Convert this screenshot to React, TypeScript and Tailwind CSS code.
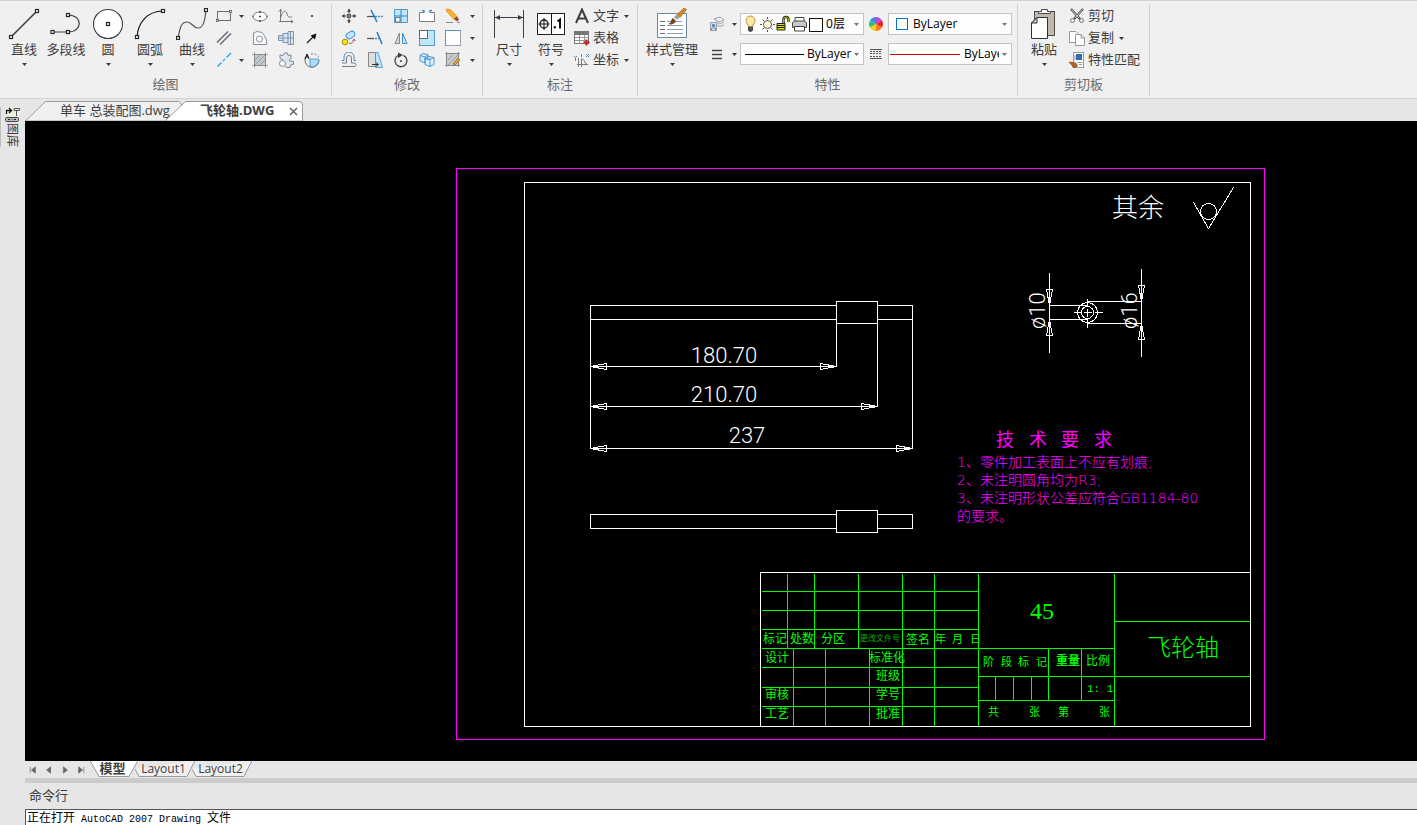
import React, { type ReactNode } from "react";

const INK = "#3b3f4a";
const BLUE = "#3f8fd0";
const SKY = "#bfe6fb";

function Icon({ size = 16, children }: { size?: number; children: ReactNode }) {
  return (
    <svg width={size} height={size} viewBox={`0 0 ${size} ${size}`} fill="none" stroke={INK} aria-hidden="true" className="shrink-0">
      {children}
    </svg>
  );
}

function Caret() {
  return (
    <svg width="5" height="3" viewBox="0 0 5 3" fill="#3c3c3c" aria-hidden="true" className="shrink-0">
      <path d="M0 0h5L2.500 3z" />
    </svg>
  );
}

function Knot({ x, y }: { x: number; y: number }) {
  return <rect x={x - 1.5} y={y - 1.5} width="3" height="3" fill="#fff" stroke="#23262e" strokeWidth="1.2" />;
}

/* ---------- large icons (32 x 32) ---------- */

const big = {
  line: (
    <>
      <path d="M3 29L29 3" strokeWidth="1.6" />
      <Knot x={3} y={29} />
      <Knot x={29} y={3} />
    </>
  ),
  polyline: (
    <>
      <path d="M2 24H18C33 24 33 7 18 7" strokeWidth="1.2" />
      <Knot x={2.5} y={24} />
      <Knot x={18} y={24} />
      <Knot x={18} y={7} />
    </>
  ),
  circle: (
    <>
      <circle cx="16" cy="16" r="14.5" fill="#fff" strokeWidth="1.1" />
      <Knot x={16} y={16} />
    </>
  ),
  arc: (
    <>
      <path d="M3 29C4 14 14 3 29 3" stroke="#111" strokeWidth="1.2" />
      <Knot x={3} y={29} />
      <Knot x={29} y={3} />
    </>
  ),
  spline: (
    <>
      <path d="M2 30C4 20 5 14 11 14C16 14 17 20 22 20C28 20 29 11 30 2" stroke="#555" strokeWidth="1.2" />
      <Knot x={2} y={30} />
      <Knot x={30} y={2} />
    </>
  ),
  dimension: (
    <>
      <path d="M1.500 2V30M30.500 2V30M2 9.500H30" strokeWidth="1" />
      <path d="M2 9.500L7 7V12zM30 9.500L25 7V12z" fill={INK} stroke="none" />
    </>
  ),
  symbol: (
    <>
      <rect x="2.500" y="5.500" width="27" height="21" fill="#fff" stroke="#222" />
      <path d="M16.500 5V27M3.500 16H14.500M9 10V22" stroke="#111" />
      <circle cx="9" cy="16" r="4" stroke="#111" strokeWidth="1.300" />
      <circle cx="19.800" cy="19.300" r="1.200" fill="#111" stroke="none" />
      <path d="M22.500 13.500L25 11.500V20.500" stroke="#111" strokeWidth="2" />
    </>
  ),
  styles: (
    <>
      <rect x="1.500" y="5.500" width="29" height="24" fill="#fff" stroke="#6f87a3" />
      <path d="M4 13.500h5M4 17.500h5M4 21.500h5M4 25.500h5" stroke="#5f6b7a" />
      <path d="M11 13.500h15M11 17.500h16M11 21.500h16M11 25.500h16" stroke="#8fa0b4" />
      <path d="M12 16c4-1 2-4 5-6l3 3c-1 3-5 4-8 3z" fill="#7a4218" stroke="none" />
      <path d="M18 9l2.500-2.500 3 3L21 12z" fill="#9aa3ab" stroke="none" />
      <path d="M21 6.500L28 0l2.500 1.500L24 9.500z" fill="#d9862b" stroke="#8c5216" strokeWidth=".6" />
    </>
  ),
  paste: (
    <>
      <rect x="6.500" y="3.500" width="20" height="24" fill="#c3b8aa" stroke="#4b4b4b" />
      <path d="M10.500 5.500V3.500h3V1.500h6v2h3v2z" fill="#fff" stroke="#4b4b4b" />
      <path d="M9 9.500H19.500V30.500H3.500V15z" fill="#fff" stroke="#2f2f36" />
      <path d="M9 9.500V15H3.500z" fill="#ccd1dc" stroke="#2f2f36" />
    </>
  ),
};

/* ---------- small icons (16 x 16) ---------- */

const small = {
  rect: (
    <>
      <rect x="1.500" y="3.500" width="13" height="9" stroke="#666b76" />
      <rect x=".5" y="11.500" width="2" height="2" fill="#fff" stroke="#555" strokeWidth=".8" />
      <rect x="13.500" y="2.500" width="2" height="2" fill="#fff" stroke="#555" strokeWidth=".8" />
    </>
  ),
  ellipse: (
    <>
      <ellipse cx="8" cy="8.500" rx="7" ry="4.500" fill="#fff" stroke="#777d88" />
      <path d="M7 8.500h2M7 4h2M7 13h2M.5 8.500h1M14.500 8.500h1" stroke="#444" strokeWidth="1.500" />
    </>
  ),
  chart: (
    <>
      <path d="M2.500 1V14M1 13.500H15M1 3.500L2.500 1.500L4 3.500M13 12L15 13.500L13 15" stroke="#777" />
      <path d="M2.500 10C5 2 8 2 9 6S12 9 14 9" stroke="#777" />
    </>
  ),
  point: <rect x="7" y="7" width="2" height="2" fill="#555" stroke="none" />,
  doubleLine: <path d="M1 12.500L12 1.500M4 14.500L15 3.500" stroke="#666b76" strokeWidth="1.500" />,
  cloud: (
    <>
      <path d="M1.500 14.500V3L5 1.500L10 2.500L12 5L14.500 10V14.500z" fill="#f8fafc" stroke="#8a8f99" />
      <circle cx="7.500" cy="9" r="3" stroke="#8a8f99" />
    </>
  ),
  shaft: (
    <>
      <path d="M.5 5.500H5V3.500H10V1.500H15.500V14.500H10V12.500H5V10.500H.5z" fill="#d8e5f1" stroke="#7c95ad" />
      <path d="M0 8h16M5 5v6M10 3v10M12.500 2v12" stroke="#7c95ad" />
    </>
  ),
  arrow: (
    <>
      <path d="M3 13L10 6" stroke="#222" strokeWidth="1.200" />
      <path d="M12.500 3.500L11 9.500L6.500 5.500z" fill="#111" stroke="none" />
    </>
  ),
  guide: <path d="M1.500 14.500L5.500 10.500M7 9L9 7M10.500 5.500L15 1" stroke="#2ba3e0" strokeWidth="1.400" />,
  hatch: (
    <>
      <rect x="2.500" y="2.500" width="11" height="11" fill="#c3c7ce" stroke="#777" />
      <path d="M0 2.500h16M2.500 0v16M13.500 0v16M0 13.500h16M3 8L8 3M3 13L13 3M8 13l5-5" stroke="#8a9099" strokeWidth=".8" />
    </>
  ),
  gear: (
    <>
      <path d="M5 8L2 6.500V3L5 3.500L6.500 1H9.500L10 3.500L13 3V6.500L11.500 7.500V9L15.500 9.500V12.500L12.500 13L12 15.500H8.500L7.500 14" fill="#dbe6f0" stroke="#7c8794" />
      <circle cx="4.500" cy="11.500" r="3" fill="#fff" stroke="#7c8794" />
    </>
  ),
  region: (
    <>
      <path d="M4 2.500A7 7 0 1 0 15 8" stroke="#666" />
      <path d="M7 2C11 1 14 3 15 6" stroke="#888" strokeDasharray="2 1.500" />
      <path d="M6 7h8.500A6.500 6.500 0 0 1 6 14.500z" fill="#a9ddf8" stroke="#4b8fb8" strokeWidth=".8" />
      <path d="M1 7L3 2L5 7M2 5h2.500" stroke="#111" />
    </>
  ),
  move: (
    <>
      <rect x="6.500" y="6.500" width="3" height="3" fill="#888" stroke={INK} strokeWidth=".8" />
      <path d="M8 2.500v3M8 10.500v3M2.500 8h3M10.500 8h3" strokeWidth="1.200" />
      <path d="M8 .5L6 3.500h4zM8 15.500L6 12.500h4zM.5 8L3.500 6v4zM15.500 8L12.500 6v4z" fill={INK} stroke="none" />
    </>
  ),
  trim: (
    <>
      <path d="M0 8.500H8" stroke="#555" strokeWidth="1.300" />
      <path d="M8 8.500H16" stroke={BLUE} strokeDasharray="2 1" strokeWidth="1.300" />
      <path d="M4 2L10 14" stroke="#2779bd" strokeWidth="1.500" />
    </>
  ),
  array: (
    <>
      <path d="M1.500 1.500h13v13h-13z" fill={SKY} stroke="#4f9bcb" />
      <path d="M8 1.500v13M1.500 8h13" stroke="#2f86c0" />
      <path d="M2.500 9.500h4.500v4.500h-4.500z" fill="#fff" stroke="#777" />
    </>
  ),
  breakAt: (
    <>
      <path d="M5 4.500H.5V13.500H15.500V4.500H11" fill="#fff" stroke="#777d88" />
      <path d="M5 5V2M11 5V2M3 2.500H5.500M10.500 2.500H13" stroke="#2f7fc0" strokeWidth="1.200" />
    </>
  ),
  pencil: (
    <>
      <path d="M1 1L5.500 1.500L12 8.500L9 11.500L2 4z" fill="#fbb02c" stroke="#c98a22" strokeWidth=".6" />
      <path d="M9 11L11.800 8.200L14 11.500L12 13.500z" fill="#8e4b2d" stroke="none" />
      <path d="M1 14.500H8M12 14.500h3" stroke="#888" />
    </>
  ),
  copy: (
    <>
      <circle cx="4" cy="12" r="2.800" fill="#ffe600" stroke="#8a7a00" strokeWidth=".8" />
      <rect x="5" y="2" width="9" height="6" rx="3" transform="rotate(-30 9.500 5)" fill={SKY} stroke={BLUE} />
      <path d="M8 13.500c3 0 5-1 5-4M11.500 11L13 9l1.500 2" stroke="#b5584a" />
    </>
  ),
  extend: (
    <>
      <path d="M0 8.500H7" stroke="#555" strokeWidth="1.300" />
      <path d="M8 8.500H13" stroke={BLUE} strokeDasharray="2 1" strokeWidth="1.300" />
      <path d="M10 2L15 14" stroke="#2779bd" strokeWidth="1.500" />
    </>
  ),
  mirror: (
    <>
      <path d="M6.500 3V13.500H2z" fill="#d5d7db" stroke="#888" />
      <path d="M9.500 3V13.500H14z" fill={SKY} stroke={BLUE} />
    </>
  ),
  scale: (
    <>
      <rect x=".5" y=".5" width="15" height="15" fill={SKY} stroke="#4f9bcb" />
      <rect x=".5" y=".5" width="8" height="8" fill="#fff" stroke="#666" />
    </>
  ),
  stretch: (
    <>
      <rect x=".5" y=".5" width="15" height="15" fill="#fff" stroke="#9aa3ad" />
      <path d="M0 .5H16M.5 0V16" stroke={BLUE} strokeDasharray="2 1" />
    </>
  ),
  offset: (
    <>
      <path d="M1 14.500H14c2-2 1-3.500-1-3.500H10.500V6a2.500 2.500 0 0 0-5 0v5H1" stroke="#777d88" />
      <path d="M1 8.500h2V5a5 5 0 0 1 10 0v3.500h2" stroke={BLUE} />
    </>
  ),
  taper: (
    <>
      <path d="M1.500.5H8.500V14.500H1.500z" fill="#dcdee1" stroke="#888" />
      <path d="M8.500.5H11L15.500 15.500H8.500z" fill={SKY} stroke={BLUE} strokeWidth=".8" />
      <path d="M5 12.500h6M9 10.500l2.500 2-2.500 2" stroke="#333" />
    </>
  ),
  rotate: (
    <>
      <path d="M5 3.500A6 6 0 1 0 10.500 3.300" strokeWidth="1.300" />
      <path d="M5 .5L10 3L5 6z" fill={INK} stroke="none" />
      <circle cx="8" cy="9" r="1" fill={INK} stroke="none" />
    </>
  ),
  block: (
    <path d="M1 3.500l3-2 5 1v3M1 3.500l5 1.500v6l-5-2zM6 5l3-2M6 6.500l5 1v7l-5-2zM6 6.500l4-2 5 1-4 2zM11 14.500l4-2v-7" fill="#d5effc" stroke={BLUE} strokeWidth=".9" />
  ),
  editHatch: (
    <>
      <rect x="1.500" y="1.500" width="12" height="12" fill="#c9ccd1" stroke="#777" />
      <path d="M0 1.500h15M1.500 0v15M3 8L8 3M3 13L13 3M0 13.500h15M13.500 0v15" stroke="#858a92" strokeWidth=".8" />
      <path d="M8 12l5-6 2 2-5 5z" fill="#e7a02c" stroke="#8c5216" strokeWidth=".6" />
    </>
  ),
  letter: <path d="M2 15L8 1.500L14 15M4 10.500H12" stroke="#3e3e3e" strokeWidth="2" />,
  table: (
    <>
      <rect x=".5" y="1.500" width="14" height="12" fill="#fff" stroke="#777" />
      <path d="M1 2h13v3H1z" fill="#777" stroke="none" />
      <path d="M1 7.500h13M1 10.500h13M5.500 5v9M10.500 5v9" stroke="#999" />
      <path d="M9.500 12.500h6M12.500 9.500v6" stroke="#cc1f1f" strokeWidth="2" />
    </>
  ),
  ordinate: (
    <>
      <path d="M4.500 6V15M3 12.500H14M7.500 7v8M7 7c5 0 2 4 6 5" stroke="#777" />
      <path d="M0 4l1.500 1.500L3 4M1.500 6v3M7.500 2v3M12 2l3 3M15 2l-3 3" stroke={BLUE} />
    </>
  ),
  layers: (
    <>
      <path d="M5 3l6-2 4 3-5 2zM7 6l4 2 4-2M8 9l3 1.500L15 9" fill="#f2f4f6" stroke="#999fa8" />
      <rect x="1.500" y="6.500" width="6" height="8" fill="#dfe6ee" stroke="#999fa8" />
      <circle cx="4.500" cy="9.500" r="1.700" fill={BLUE} stroke="none" />
      <path d="M2.500 14v-2h4v2" stroke="#888" />
    </>
  ),
  lineweight: <path d="M3 4.500h10M3 8.500h10M3 12.500h10" stroke="#444" strokeWidth="1.300" />,
  linetype: (
    <>
      <path d="M2 3.500h12M2 12.500h12" stroke="#555" />
      <path d="M2 5.500h12M2 7.500h12M2 10.500h12" stroke="#555" strokeDasharray="2 1" />
    </>
  ),
  colors: (
    <g stroke="none">
      <path d="M8 8V1A7 7 0 0 1 14 4.500z" fill="#b14be0" />
      <path d="M8 8L14 4.500A7 7 0 0 1 14 11.500z" fill="#f02020" />
      <path d="M8 8L14 11.500A7 7 0 0 1 8 15z" fill="#ff7a1a" />
      <path d="M8 8V15A7 7 0 0 1 2 11.500z" fill="#f6d21c" />
      <path d="M8 8L2 11.500A7 7 0 0 1 2 4.500z" fill="#2fc26a" />
      <path d="M8 8L2 4.500A7 7 0 0 1 8 1z" fill="#3f87e8" />
    </g>
  ),
  cut: (
    <>
      <path d="M2 1L11 11M14 1L5 11" stroke="#444" strokeWidth="2.200" />
      <path d="M2.500 1.500L10 10M13.500 1.500L6 10" stroke="#e4e4e4" strokeWidth=".9" />
      <circle cx="3.500" cy="12.500" r="2" stroke="#777" />
      <circle cx="12.500" cy="12.500" r="2" stroke="#777" />
    </>
  ),
  copyPages: (
    <>
      <path d="M.5 1.500H7L9.500 4V12.500H.5z" fill="#fff" stroke="#999" />
      <path d="M6.500 4.500H12L15.500 8V15.500H6.500z" fill="#fff" stroke="#999" />
      <path d="M12 4.500V8h3.500" stroke="#999" />
    </>
  ),
  match: (
    <>
      <rect x="4.500" y=".5" width="10" height="15" fill="#fff" stroke="#999" />
      <rect x="7" y="2" width="6" height="6" fill="#2f6fb4" stroke="none" />
      <path d="M6 3v5M8 10.500h5M10 12.500h3" stroke="#999" />
      <path d="M0 10l4 .5c3 0 5 2 4 4-2 1.500-5 1-5-1z" fill="#b5651d" stroke="#7a4218" strokeWidth=".6" />
    </>
  ),
};

type BigKey = keyof typeof big;
type SmallKey = keyof typeof small;

/* ---------- ribbon ---------- */

function Group({ title, children }: { title: string; children: ReactNode }) {
  return (
    <section aria-label={title} className="flex h-[92px] shrink-0 flex-col border-r border-[#d2d2d2]">
      <div className="flex flex-1">{children}</div>
      <h2 className="h-[22px] text-center leading-5 text-[#6a6a6a]">{title}</h2>
    </section>
  );
}

function BigButton({ icon, label, menu = true, wide = false }: { icon: BigKey; label: string; menu?: boolean; wide?: boolean }) {
  return (
    <button type="button" className={`flex flex-col items-center pt-1 ${wide ? "w-[68px]" : "w-[42px]"}`}>
      <Icon size={32}>{big[icon]}</Icon>
      <span className="mt-px mb-[6px] h-4 leading-4 whitespace-nowrap">{label}</span>
      {menu && <Caret />}
    </button>
  );
}

function SmallButton({ icon, label, narrow = false }: { icon: SmallKey; label: string; narrow?: boolean }) {
  return (
    <button type="button" aria-label={label} className={`flex h-[22px] items-center justify-center ${narrow ? "w-[22px]" : "w-[26px]"}`}>
      <Icon>{small[icon]}</Icon>
    </button>
  );
}

function MenuButton({ label, hidden = false }: { label: string; hidden?: boolean }) {
  if (hidden) return <span className="w-3" />;
  return (
    <button type="button" aria-label={label} className="flex h-[22px] w-3 items-center justify-center">
      <Caret />
    </button>
  );
}

function RowButton({ icon, label, menu }: { icon: SmallKey; label: string; menu?: boolean }) {
  return (
    <button type="button" className="flex h-[22px] items-center">
      <Icon>{small[icon]}</Icon>
      <span className="mr-[5px] ml-[3px] pb-[2px] leading-4 whitespace-nowrap">{label}</span>
      {menu && <Caret />}
    </button>
  );
}

function Combo({ label, value, inset, clip = false, children }: { label: string; value: string; inset: string; clip?: boolean; children?: ReactNode }) {
  return (
    <div className="relative h-[22px] w-[124px] border border-[#c3c3c3] bg-[#fdfdfd]">
      <select aria-label={label} className={`block h-5 appearance-none bg-transparent text-[12px] leading-5 text-black outline-none ${clip ? "w-[110px]" : "w-full"} ${inset}`}>
        <option>{value}</option>
      </select>
      <div className="pointer-events-none absolute inset-0 flex items-center">{children}</div>
      <div className="pointer-events-none absolute inset-y-0 right-1 flex items-center opacity-70">
        <Caret />
      </div>
    </div>
  );
}

function LayerState() {
  return (
    <svg width="82" height="20" viewBox="0 0 82 20" fill="none" stroke="#222" aria-hidden="true">
      <path d="M7.500 13C7.500 10 5 10 5 6.500a4.500 4.500 0 0 1 9 0c0 3.500-2.500 3.500-2.500 6.500z" fill="#ffe9a0" stroke="#b39448" />
      <path d="M7.500 13h4v3.500h-4z" fill="#555" stroke="#444" />
      <path d="M8.500 17.500h2" stroke="#444" />
      <circle cx="26.500" cy="10.500" r="4" fill="#fffbd0" stroke="#555" />
      <path d="M26.500 3v2M26.500 16v2M19 10.500h2M32 10.500h2M21.500 5.500l1.500 1.500M30 14l1.500 1.500M31.500 5.500L30 7M23 14l-1.500 1.500" stroke="#555" />
      <path d="M36 9.500h8v6.500h-8z" fill="#d8dc00" stroke="#222" />
      <path d="M36 11.500h8M36 13.500h8" stroke="#222" />
      <path d="M42.500 9V5.500a2.500 2.500 0 0 1 5 0V8" stroke="#222" strokeWidth="2.400" />
      <path d="M42.500 9V5.500a2.500 2.500 0 0 1 5 0V8" stroke="#d8dc00" strokeWidth=".8" />
      <path d="M54 8V3.500h9V8" fill="#fff" stroke="#444" />
      <path d="M51.500 8.500l2-1.500h10l2 1.500v5h-14z" fill="#c6c9cd" stroke="#444" />
      <path d="M53.500 12.500h10v4.500h-10z" fill="#fff" stroke="#444" />
      <rect x="68.500" y="4.500" width="13" height="13" fill="#fff" stroke="#111" />
    </svg>
  );
}

const drawRows: [SmallKey, string][][] = [
  [["rect", "矩形"], ["ellipse", "椭圆"], ["chart", "公式曲线"], ["point", "点"]],
  [["doubleLine", "双线"], ["cloud", "轮廓"], ["shaft", "轴"], ["arrow", "箭头"]],
  [["guide", "中心线"], ["hatch", "填充"], ["gear", "齿轮"], ["region", "局部放大"]],
];

const editRows: [SmallKey, string][][] = [
  [["move", "移动"], ["trim", "裁剪"], ["array", "阵列"], ["breakAt", "打断"], ["pencil", "删除"]],
  [["copy", "平移复制"], ["extend", "延伸"], ["mirror", "镜像"], ["scale", "缩放"], ["stretch", "拉伸"]],
  [["offset", "等距"], ["taper", "过渡"], ["rotate", "旋转"], ["block", "分解"], ["editHatch", "编辑填充"]],
];

function Ribbon() {
  return (
    <header className="flex h-[99px] shrink-0 overflow-hidden border-t border-b border-[#d2d2d2] bg-[#f0f0f0] pt-[3px]">
      <Group title="绘图">
        <div className="flex pr-[6px] pl-[3px]">
          <BigButton icon="line" label="直线" />
          <BigButton icon="polyline" label="多段线" menu={false} />
          <BigButton icon="circle" label="圆" />
          <BigButton icon="arc" label="圆弧" />
          <BigButton icon="spline" label="曲线" />
          <div className="flex flex-col pt-px">
            {drawRows.map((row, r) => (
              <div key={r} className="flex">
                <SmallButton icon={row[0][0]} label={row[0][1]} narrow />
                <MenuButton label={`${row[0][1]}选项`} hidden={r === 1} />
                {row.slice(1).map(([icon, label]) => (
                  <SmallButton key={label} icon={icon} label={label} />
                ))}
              </div>
            ))}
          </div>
        </div>
      </Group>

      <Group title="修改">
        <div className="flex flex-col px-1 pt-px">
          {editRows.map((row, r) => (
            <div key={r} className="flex">
              {row.map(([icon, label]) => (
                <SmallButton key={label} icon={icon} label={label} />
              ))}
              <MenuButton label={`${row[4][1]}选项`} />
            </div>
          ))}
        </div>
      </Group>

      <Group title="标注">
        <div className="flex pr-2 pl-[5px]">
          <BigButton icon="dimension" label="尺寸" />
          <BigButton icon="symbol" label="符号" />
          <div className="flex flex-col pt-px pl-[2px]">
            <RowButton icon="letter" label="文字" menu />
            <RowButton icon="table" label="表格" />
            <RowButton icon="ordinate" label="坐标" menu />
          </div>
        </div>
      </Group>

      <Group title="特性">
        <div className="flex pr-[5px]">
          <BigButton icon="styles" label="样式管理" wide />
          <div className="flex flex-col gap-2 pt-[9px]">
            <div className="flex items-center">
              <SmallButton icon="layers" label="图层" narrow />
              <MenuButton label="图层选项" />
              <Combo label="图层" value="0层" inset="pl-[85px]">
                <LayerState />
              </Combo>
              <span className="flex w-[24px] justify-center">
                <Icon>{small.colors}</Icon>
              </span>
              <Combo label="颜色" value="ByLayer" inset="pl-6">
                <span className="ml-[7px] h-3 w-3 border border-[#0a6fc2]" />
              </Combo>
            </div>
            <div className="flex items-center">
              <SmallButton icon="lineweight" label="线宽" narrow />
              <MenuButton label="线宽选项" />
              <Combo label="线宽" value="ByLayer" inset="pl-[66px]">
                <span className="ml-1 h-px w-[59px] bg-black" />
              </Combo>
              <span className="flex w-[24px] justify-center">
                <Icon>{small.linetype}</Icon>
              </span>
              <Combo label="线型" value="ByLayer" inset="pl-[75px]" clip>
                <span className="ml-px h-px w-[70px] bg-[#d40000]" />
              </Combo>
            </div>
          </div>
        </div>
      </Group>

      <Group title="剪切板">
        <div className="flex pr-1 pl-[5px]">
          <BigButton icon="paste" label="粘贴" />
          <div className="flex flex-col pt-px pl-1">
            <RowButton icon="cut" label="剪切" />
            <RowButton icon="copyPages" label="复制" menu />
            <RowButton icon="match" label="特性匹配" />
          </div>
        </div>
      </Group>
    </header>
  );
}

/* ---------- document tabs ---------- */

function DocumentTabs() {
  return (
    <nav aria-label="文档" className="flex h-[22px] shrink-0 bg-[#e6e6e6] pt-[2px]">
      <a href="#assembly" className="relative h-5 w-[140px] pl-[35px] leading-[18px] whitespace-nowrap">
        <svg width="162" height="20" viewBox="0 0 162 20" aria-hidden="true" className="absolute top-0 left-0">
          <path d="M.5 20L20.500.5H154L158 5L146 20z" fill="#f0f0f0" stroke="#9a9a9a" />
        </svg>
        <span className="relative">单车 总装配图.dwg</span>
      </a>
      <div className="relative flex h-5 w-[138px] pl-[35px] font-bold">
        <svg width="138" height="20" viewBox="0 0 138 20" aria-hidden="true" className="absolute top-0 left-0">
          <path d="M0 20L20.500.5H134Q137.500.5 137.500 4V20z" fill="#fff" stroke="#9a9a9a" />
        </svg>
        <a href="#shaft" className="relative flex-1 leading-[18px] whitespace-nowrap">飞轮轴.DWG</a>
        <button type="button" aria-label="关闭" className="relative flex h-5 w-5 items-center justify-center">
          <svg width="9" height="9" viewBox="0 0 9 9" stroke="#666" strokeWidth="1.500" aria-hidden="true">
            <path d="M1 1L8 8M8 1L1 8" />
          </svg>
        </button>
      </div>
    </nav>
  );
}

function Sidebar() {
  return (
    <aside className="w-[25px] shrink-0 bg-[#e6e6e6] pt-2">
      <button type="button" className="flex h-10 w-full flex-col items-center border-l border-[#bdbdbd]">
        <Icon>
          <rect x="0" y="0" width="15" height="9" fill="#efefe0" stroke="none" />
          <path d="M1.500 7V3.500H6M4 1L6.500 3.500L4 6" stroke="#111" strokeWidth="1.300" />
          <path d="M9 1.500h5.500v2H9zM11.500 4v5" stroke="#555" />
          <rect x=".5" y="10.500" width="13" height="4" rx="1" fill="#bbb" stroke="#444" />
          <path d="M3 12.500h2M6.500 12.500h1M9 12.500h2" stroke="#222" />
        </Icon>
        <span className="mr-[2px] text-[12px] leading-4 [text-orientation:sideways] [writing-mode:vertical-rl]">图库</span>
      </button>
    </aside>
  );
}

/* ---------- drawing ---------- */

const frameLines = "M760 726V572H1250";

const gridLines = [
  "M787 573V648M814 573V648M858 573V648M902 573V726M934 573V726M978 573V726",
  "M793 648V726M825 648V726M869 648V726",
  "M761 591H978M761 610H978M761 629H978M761 648H1114M761 667H978M761 687H978M761 706H978",
  "M1114 573V726M1114 621H1250M978 676H1250M978 700H1114",
  "M1048 648V700M1081 648V700M995 676V700M1013 676V700M1031 676V700",
].join("");

const titleTexts: [number, number, string][] = [
  [763, 643, "标记"],
  [790, 643, "处数"],
  [821, 643, "分区"],
  [906, 644, "签名"],
  [765, 662, "设计"],
  [869, 662, "标准化"],
  [876, 680, "班级"],
  [765, 699, "审核"],
  [876, 699, "学号"],
  [765, 718, "工艺"],
  [876, 718, "批准"],
  [1086, 665, "比例"],
];

const spacedTexts: { y: number; parts: [number, string][] }[] = [
  { y: 643, parts: [[935, "年"], [952, "月"], [970, "日"]] },
  { y: 666, parts: [[983, "阶"], [1001, "段"], [1018, "标"], [1036, "记"]] },
  { y: 716, parts: [[988, "共"], [1029, "张"], [1058, "第"], [1099, "张"]] },
];

const notes = [
  "1、零件加工表面上不应有划痕;",
  "2、未注明圆角均为R3;",
  "3、未注明形状公差应符合GB1184-80",
  "的要求。",
];

function Dimension({ x1, x2, y }: { x1: number; x2: number; y: number }) {
  return (
    <path
      d={`M${x1} ${y}H${x2}M${x1} ${y}L${x1 + 16} ${y - 3}V${y + 3}zM${x2} ${y}L${x2 - 16} ${y - 3}V${y + 3}z`}
    />
  );
}

function VerticalDimension({ x, top, bottom, reach }: { x: number; top: number; bottom: number; reach: number }) {
  return (
    <path
      d={`M${x} ${top - reach}V${bottom + reach}M${x} ${top}L${x - 3} ${top - 16}H${x + 3}zM${x} ${bottom}L${x - 3} ${bottom + 16}H${x + 3}z`}
    />
  );
}

function Drawing() {
  return (
    <svg
      viewBox="25 121 1392 640"
      role="img"
      aria-label="飞轮轴"
      className="block h-full w-full font-['Noto_Sans_CJK_SC',sans-serif]"
    >
      <g transform="translate(.5 .5)" fill="none" stroke="#fff" shapeRendering="crispEdges">
        <rect x="456" y="168" width="808" height="571" stroke="#f0f" />
        <path d={gridLines} stroke="#0f0" />
        <rect x="524" y="182" width="726" height="544" />
        <path d={frameLines} />

        <path d="M836 305H590V319H836M877 305H912V319H877M836 301H877V323H836z" />
        <path d="M590 319V448M836 323V366M877 323V406M912 319V448" />
        <Dimension x1={590} x2={836} y={366} />
        <Dimension x1={590} x2={877} y={406} />
        <Dimension x1={590} x2={912} y={448} />
        <path d="M836 514H590V528H836M877 514H912V528H877M836 510H877V532H836z" />

        <VerticalDimension x={1049} top={305} bottom={319} reach={33} />
        <VerticalDimension x={1141} top={301} bottom={323} reach={33} />
        <path d="M1049 305H1087M1049 319H1087M1087 301H1141M1087 323H1141" />
        <path d="M1073 312H1080M1083 312H1091M1094 312H1102M1087 298V305M1087 308V316M1087 319V327" />
        <circle cx="1087" cy="312" r="10" />
        <circle cx="1087" cy="312" r="6" />
        <path d="M1193 202L1208 228L1233 187" />
        <circle cx="1208" cy="211" r="8" />
      </g>

      <g fill="#fff" className="font-[Roboto,sans-serif] text-[22px] font-light">
        <text x="724" y="363" textAnchor="middle">180.70</text>
        <text x="724" y="402" textAnchor="middle">210.70</text>
        <text x="747" y="443" textAnchor="middle">237</text>
        <text transform="translate(1045 329) rotate(-90)">ø10</text>
        <text transform="translate(1137 329) rotate(-90)">ø16</text>
      </g>
      <text x="1112" y="217" fill="#fff" className="text-[26px] font-light">其余</text>

      <g fill="#f0f" className="font-['DejaVu_Sans','Noto_Sans_CJK_SC',sans-serif] text-[14px]">
        <text y="446" className="text-[18px]">
          <tspan x="996">技</tspan>
          <tspan x="1029">术</tspan>
          <tspan x="1061">要</tspan>
          <tspan x="1094">求</tspan>
        </text>
        {notes.map((note, i) => (
          <text key={note} x="957" y={467 + i * 18} className="font-extralight">{note}</text>
        ))}
      </g>

      <g fill="#0f0" className="text-[12px] font-normal">
        {titleTexts.map(([x, y, text]) => (
          <text key={`${x}-${y}`} x={x} y={y}>{text}</text>
        ))}
        {spacedTexts.map(({ y, parts }) => (
          <text key={y} y={y} className="text-[11px]">
            {parts.map(([x, text]) => (
              <tspan key={x} x={x}>{text}</tspan>
            ))}
          </text>
        ))}
        <text x="860" y="641" className="text-[8px]" fill="#00b000">更改文件号</text>
        <text x="1056" y="665" className="font-bold">重量</text>
        <text x="1087" y="692" className="font-['Liberation_Mono','Noto_Sans_CJK_SC',monospace] text-[11px]">1: 1</text>
        <text x="1030" y="619" className="font-['Liberation_Serif',serif] text-[24px]">45</text>
        <text x="1147" y="656" className="text-[24px] font-light">飞轮轴</text>
      </g>
    </svg>
  );
}

/* ---------- bottom area ---------- */

function SheetTab({ label, active = false }: { label: string; active?: boolean }) {
  return (
    <a
      href={`#${label}`}
      className={`relative h-[17px] text-center leading-[15px] ${active ? "z-10 w-[45px] font-bold" : "w-[57px] text-[12px]"}`}
    >
      <svg
        width={active ? 50 : 66}
        height="17"
        viewBox={active ? "0 0 50 17" : "0 0 66 17"}
        aria-hidden="true"
        className="absolute top-0 left-0"
      >
        {active ? (
          <path d="M0-.5L9 15.500H39L48-.5" fill="#fff" stroke="#999" />
        ) : (
          <path d="M0 8L4 15.500H52L60-.5" fill="#f0f0f0" stroke="#999" />
        )}
      </svg>
      <span className="relative">{label}</span>
    </a>
  );
}

function SheetTabs() {
  const steps = [
    ["第一页", "M1.500 1v8M8 1v8L3 5z"],
    ["上一页", "M7 1v8L2 5z"],
    ["下一页", "M3 1v8l5-4z"],
    ["最后一页", "M2 1v8l5-4zM8.500 1v8"],
  ];
  return (
    <nav aria-label="布局" className="flex h-[17px] shrink-0 bg-[#e6e6e6]">
      <div className="flex w-[65px] items-center">
        {steps.map(([label, d]) => (
          <button key={label} type="button" aria-label={label} className="flex w-4 justify-center pt-px">
            <svg width="8" height="8" viewBox="0 0 10 10" fill="#666" stroke="#666" strokeWidth=".8" aria-hidden="true">
              <path d={d} />
            </svg>
          </button>
        ))}
      </div>
      <SheetTab label="模型" active />
      <SheetTab label="Layout1" />
      <SheetTab label="Layout2" />
    </nav>
  );
}

function CommandLine() {
  return (
    <section aria-label="命令行" className="shrink-0 border-t-[5px] border-[#cbcbcb] bg-[#e6e6e6]">
      <h2 className="h-[26px] pl-1 leading-6">命令行</h2>
      <p
        role="log"
        className="h-4 border-t border-l border-[#555] bg-white pl-px text-[12px] leading-4 whitespace-pre text-black"
      >
        正在打开
        <span className="font-['Liberation_Mono',monospace] text-[10px]">{" AutoCAD 2007 Drawing "}</span>
        文件
      </p>
    </section>
  );
}

export default function App() {
  return (
    <div className="flex h-screen flex-col overflow-hidden bg-[#e6e6e6] font-['Open_Sans','Noto_Sans_CJK_SC',sans-serif] text-[13px] text-[#3e3e3e]">
      <Ribbon />
      <div className="flex min-h-0 flex-1">
        <Sidebar />
        <div className="flex min-w-0 flex-1 flex-col">
          <DocumentTabs />
          <main className="min-h-0 flex-1 bg-black">
            <Drawing />
          </main>
          <SheetTabs />
          <CommandLine />
        </div>
      </div>
    </div>
  );
}
